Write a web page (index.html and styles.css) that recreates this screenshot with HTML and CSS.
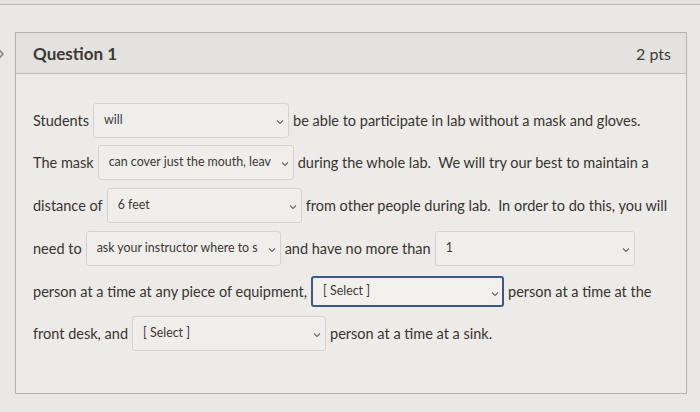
FILE: index.html
```html
<!DOCTYPE html>
<html>
<head>
<meta charset="utf-8">
<link rel="stylesheet" href="styles.css">
</head>
<body>
<div class="topbar"></div>
<div class="wrap">
  <svg class="toggle" width="10" height="14" viewBox="0 0 10 14"><path d="M1 1.5 L6 7 L1 12.5" fill="none" stroke="#8a8986" stroke-width="1.6"/></svg>
  <div class="card">
    <div class="header">
      <span class="title">Question 1</span>
      <span class="pts">2 pts</span>
    </div>
    <div class="body">
      <div class="line">
        <span>Students</span>
        <div class="select w196"><span class="val">will</span><svg class="chev" width="8" height="6" viewBox="0 0 8 6"><path d="M1 1.5 L4 4.5 L7 1.5" fill="none" stroke="#666" stroke-width="1.1"/></svg></div>
        <span>be able to participate in lab without a mask and gloves.</span>
      </div>
      <div class="line">
        <span>The mask</span>
        <div class="select w196"><span class="val">can cover just the mouth, leav</span><svg class="chev" width="8" height="6" viewBox="0 0 8 6"><path d="M1 1.5 L4 4.5 L7 1.5" fill="none" stroke="#666" stroke-width="1.1"/></svg></div>
        <span>during the whole lab.&nbsp; We will try our best to maintain a</span>
      </div>
      <div class="line">
        <span>distance of</span>
        <div class="select w195"><span class="val">6 feet</span><svg class="chev" width="8" height="6" viewBox="0 0 8 6"><path d="M1 1.5 L4 4.5 L7 1.5" fill="none" stroke="#666" stroke-width="1.1"/></svg></div>
        <span>from other people during lab.&nbsp; In order to do this, you will</span>
      </div>
      <div class="line">
        <span>need to</span>
        <div class="select w195"><span class="val">ask your instructor where to s</span><svg class="chev" width="8" height="6" viewBox="0 0 8 6"><path d="M1 1.5 L4 4.5 L7 1.5" fill="none" stroke="#666" stroke-width="1.1"/></svg></div>
        <span>and have no more than</span>
        <div class="select w200"><span class="val">1</span><svg class="chev" width="8" height="6" viewBox="0 0 8 6"><path d="M1 1.5 L4 4.5 L7 1.5" fill="none" stroke="#666" stroke-width="1.1"/></svg></div>
      </div>
      <div class="line">
        <span>person at a time at any piece of equipment,</span>
        <div class="select w193 focus"><span class="val">[ Select ]</span><svg class="chev" width="8" height="6" viewBox="0 0 8 6"><path d="M1 1.5 L4 4.5 L7 1.5" fill="none" stroke="#666" stroke-width="1.1"/></svg></div>
        <span>person at a time at the</span>
      </div>
      <div class="line">
        <span>front desk, and</span>
        <div class="select w194"><span class="val">[ Select ]</span><svg class="chev" width="8" height="6" viewBox="0 0 8 6"><path d="M1 1.5 L4 4.5 L7 1.5" fill="none" stroke="#666" stroke-width="1.1"/></svg></div>
        <span>person at a time at a sink.</span>
      </div>
    </div>
  </div>
</div>
</body>
</html>
```
FILE: styles.css
```css
html, body {
  margin: 0;
  padding: 0;
  background: #e9e8e4;
  font-family: Lato, "Liberation Sans", sans-serif;
  color: #363531;
}
.topbar {
  height: 4px;
  border-bottom: 1px solid #b9b8b4;
  background: #e4e3df;
}
.wrap {
  position: relative;
  padding: 27px 13px 0 15px;
}
.toggle {
  position: absolute;
  left: -3px;
  top: 42px;
}
.card {
  border: 1px solid #b3b2ae;
  background: #ecebe7;
  height: 360px;
  box-sizing: content-box;
}
.header {
  height: 40px;
  background: #e3e2de;
  border-bottom: 1px solid #bdbcb8;
  display: flex;
  justify-content: space-between;
  align-items: center;
  padding: 0 15px 0 17px;
}
.title {
  font-weight: 700;
  font-size: 17px;
  color: #3a3935;
}
.pts {
  font-size: 16px;
  font-weight: 400;
  color: #3e3d39;
}
.body {
  padding: 29px 0 0 17px;
  font-size: 14.5px;
}
.line {
  display: flex;
  align-items: center;
  gap: 4px;
  height: 34px;
  margin-bottom: 8.8px;
  white-space: nowrap;
}
.select {
  box-sizing: border-box;
  height: 35px;
  border: 1px solid #d3d2ce;
  border-radius: 3px;
  background: #efeeea;
  display: flex;
  align-items: flex-start;
  justify-content: space-between;
  padding: 9px 4px 0 10px;
  font-size: 12.4px;
  color: #3a3935;
}
.select .val {
  overflow: hidden;
  line-height: 14px;
}
.select .chev {
  margin-top: 6px;
  flex: none;
}
.w196 { width: 196px; }
.w195 { width: 195px; }
.w200 { width: 200px; }
.w193 { width: 193px; }
.w194 { width: 194px; }
.focus {
  border: 2px solid #3d5a86;
  border-radius: 3px;
  height: 31px;
  padding-top: 6px;
  padding-right: 3px;
  background: #f1f0ec;
}
.focus .chev { margin-top: 7px; }
```
